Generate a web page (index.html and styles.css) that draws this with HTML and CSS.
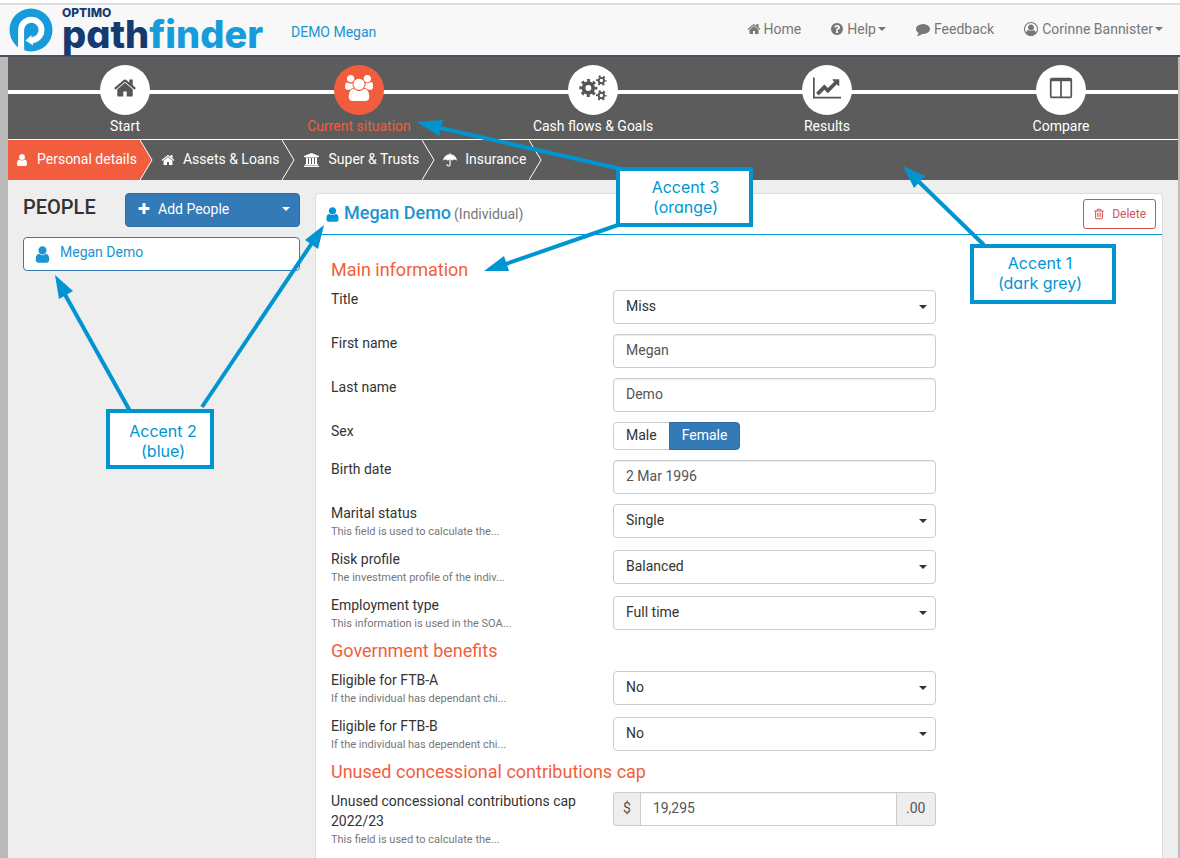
FILE: index.html
```html
<!DOCTYPE html>
<html lang="en">
<head>
    <meta charset="UTF-8">
    <meta name="viewport" content="width=device-width, initial-scale=1.0">
    <title>Optimo Pathfinder - Current situation</title>
    <link rel="stylesheet" href="styles.css">
</head>
<body>

    <!-- Icon sprite -->
    <svg class="sprite" aria-hidden="true">
        <symbol id="i-home" viewBox="0 0 1792 1792"><path d="M1472 992v480q0 26-19 45t-45 19h-384v-384h-256v384h-384q-26 0-45-19t-19-45v-480q0-1 .5-3t.5-3l575-474 575 474q1 2 1 6zm223-69l-62 74q-8 9-21 11h-3q-13 0-21-7l-692-577-692 577q-12 8-24 7-13-2-21-11l-62-74q-8-10-7-23.5t11-21.5l719-599q32-26 76-26t76 26l244 204v-195q0-14 9-23t23-9h192q14 0 23 9t9 23v408l219 182q10 8 11 21.5t-7 23.5z"/></symbol>
        <symbol id="i-help" viewBox="0 0 1792 1792"><path d="M1024 1376v-192q0-14-9-23t-23-9h-192q-14 0-23 9t-9 23v192q0 14 9 23t23 9h192q14 0 23-9t9-23zm256-672q0-88-55.5-163t-138.5-116-170-41q-243 0-371 213-15 24 8 42l132 100q7 6 19 6 16 0 25-12 53-68 86-92 34-24 86-24 48 0 85.5 26t37.5 59q0 38-20 61t-68 45q-63 28-115.5 86.5t-52.5 125.5v36q0 14 9 23t23 9h192q14 0 23-9t9-23q0-19 21.5-49.5t54.5-49.5q32-18 49-28.5t46-35 44.5-48 28-60.5 12.5-81zm384 192q0 209-103 385.5t-279.5 279.5-385.5 103-385.5-103-279.5-279.5-103-385.5 103-385.5 279.5-279.5 385.5-103 385.5 103 279.5 279.5 103 385.5z"/></symbol>
        <symbol id="i-comment" viewBox="0 0 1792 1792"><path d="M1792 896q0 174-120 321.5t-326 233-450 85.5q-70 0-145-8-198 175-460 242-49 14-114 22-17 2-30.5-9t-17.5-29v-1q-3-4-.5-12t2-10 4.5-9.5l6-9 7-8.5 8-9q7-8 31-34.5t34.5-38 31-39.5 32.5-51 27-59 26-76q-157-89-247.5-220t-90.5-281q0-130 71-248.5t191-204.5 286-136.5 348-50.5q244 0 450 85.5t326 233 120 321.5z"/></symbol>
        <symbol id="i-account" viewBox="0 0 1792 1792"><path d="M896 0q182 0 348 71t286 191 191 286 71 348q0 181-70.5 347t-190.5 286-286 191.5-349 71.5-349-71-285.5-191.5-190.5-286-71-347.5 71-348 191-286 286-191 348-71zm619 1351q149-205 149-455 0-156-61-298t-164-245-245-164-298-61-298 61-245 164-164 245-61 298q0 250 149 455 66-327 306-327 131 128 313 128t313-128q240 0 306 327zm-235-647q0-159-112.5-271.5t-271.5-112.5-271.5 112.5-112.5 271.5 112.5 271.5 271.5 112.5 271.5-112.5 112.5-271.5z" fill-rule="evenodd"/></symbol>
        <symbol id="i-users" viewBox="0 0 1920 1792"><path d="M593 896q-162 5-265 128h-134q-82 0-138-40.5t-56-118.5q0-353 124-353 6 0 43.5 21t97.5 42.5 119 21.5q67 0 133-23-5 37-5 66 0 159 93 293zm1071 637q0 120-73 189.5t-194 69.5h-874q-121 0-194-69.5t-73-189.5q0-53 3.5-103.5t14-109 26.5-108.5 43-97.5 62-81 85.5-53.5 111.5-20q10 0 43 21.5t73 48 107 48 135 21.5 135-21.5 107-48 73-48 43-21.5q61 0 111.5 20t85.5 53.5 62 81 43 97.5 26.5 108.5 14 109 3.5 103.5zm-1024-1277q0 106-75 181t-181 75-181-75-75-181 75-181 181-75 181 75 75 181zm704 384q0 159-112.5 271.5t-271.5 112.5-271.5-112.5-112.5-271.5 112.5-271.5 271.5-112.5 271.5 112.5 112.5 271.5zm576 225q0 78-56 118.5t-138 40.5h-134q-103-123-265-128 93-134 93-293 0-29-5-66 66 23 133 23 59 0 119-21.5t97.5-42.5 43.5-21q124 0 124 353zm-128-609q0 106-75 181t-181 75-181-75-75-181 75-181 181-75 181 75 75 181z"/></symbol>
        <symbol id="i-user" viewBox="0 0 1792 1792"><path d="M1536 1399q0 109-62.5 187t-150.5 78h-854q-88 0-150.5-78t-62.5-187q0-85 8.5-160.5t31.5-152 58.5-131 94-89 134.5-34.5q131 128 313 128t313-128q76 0 134.5 34.5t94 89 58.5 131 31.5 152 8.5 160.5zm-256-887q0 159-112.5 271.5t-271.5 112.5-271.5-112.5-112.5-271.5 112.5-271.5 271.5-112.5 271.5 112.5 112.5 271.5z"/></symbol>
        <symbol id="i-cogs" viewBox="0 0 30 28">
            <g fill="none" stroke="currentColor">
                <circle cx="10" cy="14" r="5.2" stroke-width="4"/>
                <circle cx="10" cy="14" r="8.2" stroke-width="3" stroke-dasharray="3.2 3.24" stroke-dashoffset="1.6"/>
                <circle cx="24" cy="6" r="2.9" stroke-width="2"/>
                <circle cx="24" cy="6" r="4.7" stroke-width="2" stroke-dasharray="2.2 2.72" stroke-dashoffset="1.1"/>
                <circle cx="24" cy="22" r="2.9" stroke-width="2"/>
                <circle cx="24" cy="22" r="4.7" stroke-width="2" stroke-dasharray="2.2 2.72" stroke-dashoffset="1.1"/>
            </g>
        </symbol>
        <symbol id="i-chart" viewBox="0 0 2048 1792"><path d="M2048 1536v128h-2048v-1536h128v1408h1920zm-128-1248v435q0 21-19.5 29.5t-35.5-7.5l-121-121-633 633q-10 10-23 10t-23-10l-233-233-416 416-192-192 585-585q10-10 23-10t23 10l233 233 464-464-121-121q-16-16-7.5-35.5t29.5-19.5h435q14 0 23 9t9 23z"/></symbol>
        <symbol id="i-columns" viewBox="0 0 1792 1792"><path d="M224 1536h608v-1152h-640v1120q0 13 9.5 22.5t22.5 9.5zm1376-32v-1120h-640v1152h608q13 0 22.5-9.5t9.5-22.5zm128-1216v1216q0 66-47 113t-113 47h-1344q-66 0-113-47t-47-113v-1216q0-66 47-113t113-47h1344q66 0 113 47t47 113z" fill-rule="evenodd"/></symbol>
        <symbol id="i-bank" viewBox="0 0 1920 1792"><path d="M960 0l960 384v128h-128q0 26-20.5 45t-48.5 19h-1526q-28 0-48.5-19t-20.5-45h-128v-128zm-704 640h256v768h128v-768h256v768h128v-768h256v768h128v-768h256v768h59q28 0 48.5 19t20.5 45v64h-1664v-64q0-26 20.5-45t48.5-19h59v-768zm1595 960q28 0 48.5 19t20.5 45v128h-1920v-128q0-26 20.5-45t48.5-19h1782z"/></symbol>
        <symbol id="i-umbrella" viewBox="0 0 14 14">
            <path d="M6.5 1.3V.6a.5.5 0 0 1 1 0v.7C10.7 1.5 13.2 3.8 13.9 7.1c0 .4-.4.5-.6.2C12 6 10.5 6.1 9.5 7.6c-.2.2-.4.2-.5 0C8 6 6 6 5 7.6c-.1.2-.3.2-.5 0C3.5 6.1 2 6 .7 7.3.4 7.6 0 7.5.1 7.1.8 3.8 3.3 1.5 6.5 1.3z"/>
            <path d="M7 6.5v5a1.5 1.5 0 0 1-3 0" fill="none" stroke="currentColor" stroke-width="1.2" stroke-linecap="round"/>
        </symbol>
        <symbol id="i-plus" viewBox="0 0 1792 1792"><path d="M1600 736v192q0 40-28 68t-68 28h-416v416q0 40-28 68t-68 28h-192q-40 0-68-28t-28-68v-416h-416q-40 0-68-28t-28-68v-192q0-40 28-68t68-28h416v-416q0-40 28-68t68-28h192q40 0 68 28t28 68v416h416q40 0 68 28t28 68z"/></symbol>
        <symbol id="i-trash" viewBox="0 0 1792 1792"><path fill-rule="evenodd" d="M704 736v576q0 14-9 23t-23 9h-64q-14 0-23-9t-9-23v-576q0-14 9-23t23-9h64q14 0 23 9t9 23zm256 0v576q0 14-9 23t-23 9h-64q-14 0-23-9t-9-23v-576q0-14 9-23t23-9h64q14 0 23 9t9 23zm256 0v576q0 14-9 23t-23 9h-64q-14 0-23-9t-9-23v-576q0-14 9-23t23-9h64q14 0 23 9t9 23zm128 724v-948h-896v948q0 22 7 40.5t14.5 27 10.5 8.5h832q3 0 10.5-8.5t14.5-27 7-40.5zm-672-1076h448l-48-117q-7-9-17-11h-317q-10 2-17 11zm928 32v64q0 14-9 23t-23 9h-96v948q0 83-47 143.5t-113 60.5h-832q-66 0-113-58.5t-47-141.5v-952h-96q-14 0-23-9t-9-23v-64q0-14 9-23t23-9h309l70-167q15-37 54-63t79-26h320q40 0 79 26t54 63l70 167h309q14 0 23 9t9 23z"/></symbol>
    </svg>

    <header class="navbar">
        <a class="brand" href="#" aria-label="Optimo Pathfinder">
            <svg class="brand-mark" viewBox="0 0 44 44">
                <circle cx="22" cy="22" r="21.5" fill="#169bdb"/>
                <path d="M12.1 44V22a10.2 10.2 0 1 1 11.5 10" fill="none" stroke="#fff" stroke-width="6"/>
                <path d="M9.1 38h6v6h-4z" fill="#f8f8f8"/>
                <path d="M16.5 32.5l6-5.5v2.5l3-.8v6.3l-1.8.2.6 2.3z" fill="#fff"/>
            </svg>
            <span class="brand-text">
                <span class="brand-top">OPTIMO</span>
                <span class="brand-name">path<span class="brand-light">finder</span></span>
            </span>
        </a>
        <a class="client" href="#">DEMO Megan</a>
        <nav class="nav-right">
            <a href="#"><svg class="icon slim"><use href="#i-home"/></svg>Home</a>
            <a href="#"><svg class="icon slim"><use href="#i-help"/></svg>Help<span class="caret"></span></a>
            <a href="#"><svg class="icon"><use href="#i-comment"/></svg>Feedback</a>
            <a href="#"><svg class="icon"><use href="#i-account"/></svg>Corinne Bannister<span class="caret"></span></a>
        </nav>
    </header>

    <main class="wrapper">
        <!-- Main steps -->
        <nav class="steps">
            <a class="step" href="#"><span class="step-circle"><svg class="step-icon"><use href="#i-home"/></svg></span>Start</a>
            <a class="step active" href="#"><span class="step-circle"><svg class="step-icon wide"><use href="#i-users"/></svg></span>Current situation</a>
            <a class="step" href="#"><span class="step-circle"><svg class="step-icon wide"><use href="#i-cogs"/></svg></span>Cash flows &amp; Goals</a>
            <a class="step" href="#"><span class="step-circle"><svg class="step-icon wide"><use href="#i-chart"/></svg></span>Results</a>
            <a class="step" href="#"><span class="step-circle"><svg class="step-icon"><use href="#i-columns"/></svg></span>Compare</a>
        </nav>

        <!-- Sub steps -->
        <nav class="tabs">
            <a class="tab active" href="#"><svg class="icon"><use href="#i-user"/></svg><span>Personal details</span><svg class="chevron" viewBox="0 0 13 40"><path d="M0 0l12 20L0 40"/></svg></a>
            <a class="tab" href="#"><svg class="icon"><use href="#i-home"/></svg><span>Assets &amp; Loans</span><svg class="chevron" viewBox="0 0 13 40"><path d="M0 0l12 20L0 40"/></svg></a>
            <a class="tab" href="#"><svg class="icon wide"><use href="#i-bank"/></svg><span>Super &amp; Trusts</span><svg class="chevron" viewBox="0 0 13 40"><path d="M0 0l12 20L0 40"/></svg></a>
            <a class="tab" href="#"><svg class="icon"><use href="#i-umbrella"/></svg><span>Insurance</span><svg class="chevron" viewBox="0 0 13 40"><path d="M0 0l12 20L0 40"/></svg></a>
        </nav>

        <div class="content">
            <aside class="people">
                <div class="people-head">
                    <h2>PEOPLE</h2>
                    <button class="add-btn" type="button"><svg class="icon"><use href="#i-plus"/></svg><span>Add People</span><span class="caret"></span></button>
                </div>
                <a class="person" href="#"><svg class="icon"><use href="#i-user"/></svg>Megan Demo</a>
            </aside>

            <section class="panel">
                <div class="panel-head">
                    <svg class="icon"><use href="#i-user"/></svg>
                    <h1>Megan Demo</h1>
                    <small>(Individual)</small>
                    <button class="delete-btn" type="button"><svg class="icon"><use href="#i-trash"/></svg>Delete</button>
                </div>

                <form class="panel-body">
                    <h3>Main information</h3>
                    <div class="row">
                        <label for="title">Title</label>
                        <div class="select"><select id="title"><option>Miss</option></select></div>
                    </div>
                    <div class="row">
                        <label for="first">First name</label>
                        <input class="field" type="text" id="first" value="Megan">
                    </div>
                    <div class="row">
                        <label for="last">Last name</label>
                        <input class="field" type="text" id="last" value="Demo">
                    </div>
                    <div class="row" role="radiogroup" aria-labelledby="sex">
                        <span class="row-name" id="sex">Sex</span>
                        <div class="toggle">
                            <input type="radio" name="sex" id="male"><label for="male">Male</label>
                            <input type="radio" name="sex" id="female" checked><label for="female">Female</label>
                        </div>
                    </div>
                    <div class="row">
                        <label for="birth">Birth date</label>
                        <input class="field" type="text" id="birth" value="2 Mar 1996">
                    </div>
                    <div class="row">
                        <label for="marital">Marital status <small>This field is used to calculate the...</small></label>
                        <div class="select"><select id="marital"><option>Single</option></select></div>
                    </div>
                    <div class="row">
                        <label for="risk">Risk profile <small>The investment profile of the indiv...</small></label>
                        <div class="select"><select id="risk"><option>Balanced</option></select></div>
                    </div>
                    <div class="row">
                        <label for="employment">Employment type <small>This information is used in the SOA...</small></label>
                        <div class="select"><select id="employment"><option>Full time</option></select></div>
                    </div>

                    <h3>Government benefits</h3>
                    <div class="row">
                        <label for="ftba">Eligible for FTB-A <small>If the individual has dependant chi...</small></label>
                        <div class="select"><select id="ftba"><option>No</option></select></div>
                    </div>
                    <div class="row">
                        <label for="ftbb">Eligible for FTB-B <small>If the individual has dependent chi...</small></label>
                        <div class="select"><select id="ftbb"><option>No</option></select></div>
                    </div>

                    <h3>Unused concessional contributions cap</h3>
                    <div class="row">
                        <label for="cap">Unused concessional contributions cap 2022/23 <small>This field is used to calculate the...</small></label>
                        <div class="input-group">
                            <span class="addon">$</span>
                            <input class="field" type="text" id="cap" value="19,295">
                            <span class="addon">.00</span>
                        </div>
                    </div>
                </form>
            </section>
        </div>
    </main>

    <!-- Callouts over the page -->
    <svg class="arrows" width="1180" height="858" aria-hidden="true">
        <g stroke="#0095d1" stroke-width="4">
            <path d="M621 169L436 127"/>
            <path d="M618 225L500 266"/>
            <path d="M984 245L915 178"/>
            <path d="M130 411L63 291"/>
            <path d="M202 407L314 240"/>
        </g>
        <g fill="#0095d1">
            <path d="M417 122l26-2-4 16z"/>
            <path d="M484 271l20-15 5 15z"/>
            <path d="M903 166l22 10-11 12z"/>
            <path d="M55 275l18 16-14 8z"/>
            <path d="M324 225l-19 15 13 9z"/>
        </g>
    </svg>
    <div class="callout callout-orange">Accent 3<br>(orange)</div>
    <div class="callout callout-grey">Accent 1<br>(dark grey)</div>
    <div class="callout callout-blue">Accent 2<br>(blue)</div>

</body>
</html>
```

FILE: styles.css
```css
* {
    box-sizing: border-box;
}

body {
    margin: 0;
    position: relative;
    min-height: 100vh;
    display: flex;
    flex-direction: column;
    font-family: Roboto, "Liberation Sans", sans-serif;
    font-size: 14px;
    line-height: 20px;
    color: #333;
    background-color: #fff;
}

a {
    text-decoration: none;
    color: #1a94d2;
}

h1, h2, h3 {
    margin: 0;
    font-weight: 500;
}

input, select, button {
    font: inherit;
}

.sprite {
    position: absolute;
    width: 0;
    height: 0;
}

.icon {
    width: 14px;
    height: 14px;
    flex: none;
    fill: currentColor;
}

.icon.wide {
    width: 17px;
}

.caret {
    border: 4px solid transparent;
    border-top-color: currentColor;
    border-bottom: 0;
}

/* Top bar */
.navbar {
    display: flex;
    align-items: center;
    height: 54px;
    margin-top: 3px;
    padding: 0 17px 0 9px;
    background-color: #f8f8f8;
    border-top: 2px solid #ddd;
    border-bottom: 2px solid #47535f;
}

.brand {
    display: flex;
    align-items: center;
    gap: 9px;
    width: 267px;
    margin-right: 15px;
    color: #143a70;
    font-family: Inter, sans-serif;
}

.brand-mark {
    width: 44px;
    height: 44px;
}

.brand-text {
    display: flex;
    flex-direction: column;
    padding-bottom: 5px;
    font-feature-settings: "cv11";
}

.brand-top {
    font-size: 12px;
    line-height: 12px;
    font-weight: 800;
}

.brand-name {
    font-size: 38px;
    line-height: 30px;
    font-weight: 800;
}

.brand-light {
    color: #169bdb;
}

.client {
    padding-top: 4px;
}

.nav-right {
    display: flex;
    gap: 30px;
    margin-left: auto;
    padding-bottom: 2px;
}

.nav-right a {
    display: flex;
    align-items: center;
    gap: 2px;
    color: #777;
}

.nav-right .icon {
    margin-right: 2px;
}

.nav-right .slim {
    margin: 0 1px 0 -1px;
}

.wrapper {
    flex: 1;
    display: flex;
    flex-direction: column;
    background-color: #eee;
    border-left: 8px solid #bbb;
    border-right: 2px solid #bbb;
}

/* Steps */
.steps {
    display: grid;
    grid-template-columns: repeat(5, 1fr);
    padding: 8px 0 3px;
    background: linear-gradient(#fff, #fff) 0 33px / 100% 4px no-repeat #5c5c5c;
    border-bottom: 1px solid #fff;
}

.step {
    display: flex;
    flex-direction: column;
    align-items: center;
    gap: 1px;
    color: #fff;
}

.step.active {
    color: #f25e3d;
}

.step-circle {
    display: flex;
    align-items: center;
    justify-content: center;
    width: 50px;
    height: 50px;
    padding-bottom: 4px;
    border-radius: 50%;
    background-color: #fff;
    color: #555;
}

.step.active .step-circle {
    background-color: #f25e3d;
    color: #fff;
}

.step-icon {
    width: 24px;
    height: 26px;
    fill: currentColor;
}

.step-icon.wide {
    width: 28px;
}

/* Tabs */
.tabs {
    display: flex;
    background-color: #5c5c5c;
}

.tab {
    display: flex;
    align-items: center;
    gap: 8px;
    height: 40px;
    padding-left: 8px;
    color: #fff;
}

.tab span {
    padding-bottom: 2px;
}

.tab.active {
    padding-left: 7px;
    background: linear-gradient(#f25e3d, #f25e3d) 0 0 / calc(100% - 13px) 100% no-repeat;
}

.chevron {
    width: 13px;
    height: 40px;
    margin-left: -5px;
    fill: none;
    stroke: #fff;
}

.tab.active .chevron {
    fill: #f25e3d;
}

.content {
    flex: 1;
    display: grid;
    grid-template-columns: 277px 1fr;
    gap: 15px;
    padding: 13px 15px 0;
}

/* People list */
.people-head {
    display: flex;
    justify-content: space-between;
    margin-bottom: 10px;
}

.people-head h2 {
    font-size: 20px;
    line-height: 29px;
}

.add-btn {
    display: flex;
    align-items: center;
    gap: 7px;
    width: 175px;
    height: 34px;
    padding: 0 9px 2px 11px;
    color: #fff;
    background-color: #337ab7;
    border: 1px solid #2e6da4;
    border-radius: 4px;
}

.add-btn .caret {
    margin-left: auto;
}

.person {
    display: flex;
    align-items: center;
    gap: 8px;
    height: 34px;
    padding: 0 9px 4px;
    background-color: #fff;
    border: 1px solid #337ab7;
    border-radius: 4px;
}

.person .icon {
    width: 19px;
    height: 19px;
    margin-top: 4px;
}

/* Detail panel */
.panel {
    background-color: #fff;
    border: 1px solid #ddd;
    border-bottom: 0;
    border-radius: 4px 4px 0 0;
}

.panel-head {
    display: flex;
    align-items: center;
    gap: 3px;
    height: 41px;
    padding: 0 6px 0 8px;
    border-bottom: 1px solid #0095d1;
}

.panel-head .icon {
    width: 17px;
    height: 17px;
    color: #0095d8;
}

.panel-head h1 {
    padding-bottom: 2px;
    font-size: 18px;
    color: #1a94d2;
}

.panel-head small {
    font-size: 14px;
    color: #777;
}

.panel-head .delete-btn {
    display: flex;
    align-items: center;
    gap: 7px;
    height: 30px;
    margin-left: auto;
    padding: 0 9px;
    font-size: 12px;
    color: #d05452;
    background-color: #fff;
    border: 1px solid #d05452;
    border-radius: 3px;
}

.panel-head .delete-btn .icon {
    width: 12px;
    height: 12px;
    color: inherit;
}

.panel-body {
    padding-top: 26px;
}

.panel-body h3 {
    margin-bottom: 11px;
    padding: 0 15px;
    font-size: 18px;
    line-height: 18px;
    font-weight: 400;
    color: #f25e3d;
}

.row {
    display: grid;
    grid-template-columns: 4fr 5fr 3fr;
    align-items: start;
    margin-bottom: 10px;
}

.row > * {
    margin: 0 15px;
}

.row > label,
.row-name {
    margin-top: -1px;
}

.row small {
    display: block;
    font-size: 11px;
    line-height: 17px;
    color: #777;
}

.field, .select select {
    width: 100%;
    min-width: 0;
    height: 34px;
    padding: 0 12px 2px;
    color: #555;
    background-color: #fff;
    border: 1px solid #ccc;
    border-radius: 4px;
}

.field {
    box-shadow: inset 0 1px 1px rgba(0, 0, 0, 0.075);
}

.row > .field {
    width: auto;
}

.select {
    position: relative;
}

.select select {
    display: block;
    appearance: none;
    color: #333;
}

.select::after {
    content: "";
    position: absolute;
    top: 15px;
    right: 9px;
    border: 4px solid transparent;
    border-top-color: #333;
    border-bottom: 0;
    pointer-events: none;
}

.toggle {
    display: flex;
}

.toggle input {
    position: absolute;
    opacity: 0;
}

.toggle label {
    height: 28px;
    padding: 2px 12px;
    border: 1px solid #ccc;
    border-radius: 4px 0 0 4px;
}

.toggle label:last-child {
    margin-left: -1px;
    border-radius: 0 4px 4px 0;
}

.toggle input:checked + label {
    color: #fff;
    background-color: #337ab7;
    border-color: #2e6da4;
}

.input-group {
    display: flex;
}

.input-group .field {
    flex: 1;
    border-radius: 0;
}

.addon {
    padding: 5px 9px 7px;
    color: #555;
    background-color: #eee;
    border: 1px solid #ccc;
}

.addon:first-child {
    border-right: 0;
    border-radius: 4px 0 0 4px;
}

.addon:last-child {
    border-left: 0;
    border-radius: 0 4px 4px 0;
}

/* Callouts */
.arrows {
    position: absolute;
    top: 0;
    left: 0;
    pointer-events: none;
}

.callout {
    position: absolute;
    height: 60px;
    border: 4px solid #0095d1;
    background-color: #fff;
    color: #0095d1;
    font-family: Inter, sans-serif;
    font-size: 16px;
    line-height: 20px;
    font-feature-settings: "cv11";
    text-align: center;
}

.callout-orange {
    top: 167px;
    left: 616px;
    width: 137px;
    padding: 6px 0 0 2px;
}

.callout-grey {
    top: 244px;
    left: 970px;
    width: 146px;
    padding: 5px 6px 0 0;
}

.callout-blue {
    top: 409px;
    left: 106px;
    width: 108px;
    padding: 8px 0 0 6px;
}
```
